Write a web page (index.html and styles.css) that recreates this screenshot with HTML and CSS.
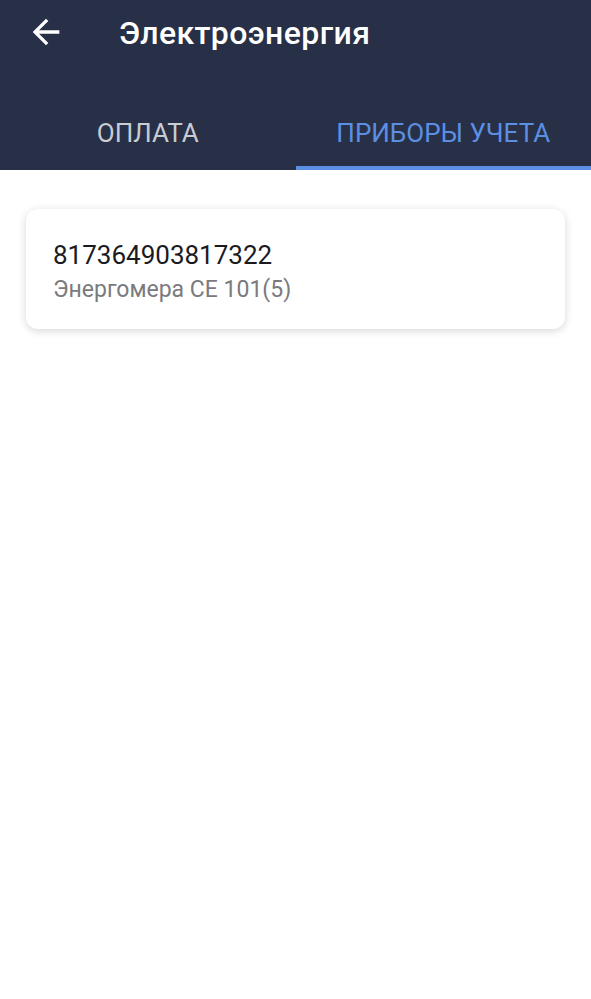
FILE: index.html
```html
<!DOCTYPE html>
<html lang="ru">
<head>
  <meta charset="UTF-8" />
  <meta name="viewport" content="width=device-width, initial-scale=1.0" />
  <title>Электроэнергия</title>
  <link rel="stylesheet" href="styles.css">
</head>
<body>
  <header class="appbar">
    <div class="toolbar">
      <button class="back-btn" aria-label="Назад">
        <svg viewBox="0 0 24 24" width="40" height="40">
          <path d="M20 11H7.83l5.59-5.59L12 4l-8 8 8 8 1.41-1.41L7.83 13H20v-2z" fill="#ffffff" />
        </svg>
      </button>
      <h1 class="title">Электроэнергия</h1>
    </div>
    <nav class="tabs">
      <div class="tab">ОПЛАТА</div>
      <div class="tab tab-active">ПРИБОРЫ УЧЕТА</div>
    </nav>
  </header>

  <main class="content">
    <div class="meter-card">
      <div class="meter-number">817364903817322</div>
      <div class="meter-model">Энергомера CE 101(5)</div>
    </div>
  </main>
</body>
</html>
```

FILE: styles.css
```css
:root {
  --navy: #283047;
  --accent: #5b8fe4;
  --tab-text: #c9ccd3;
  --text-dark: #1b1b1f;
  --text-gray: #7a7a7e;
}
* {
  box-sizing: border-box;
}
body {
  margin: 0;
  font-family: Roboto, 'Noto Sans', sans-serif;
  background: #ffffff;
}
.appbar {
  background: var(--navy);
  height: 170px;
  display: flex;
  flex-direction: column;
}
.toolbar {
  height: 66px;
  display: flex;
  align-items: center;
  padding-left: 26px;
}
.back-btn {
  background: none;
  border: none;
  padding: 0;
  width: 40px;
  height: 40px;
  margin-top: -2px;
  cursor: pointer;
}
.back-btn svg {
  display: block;
}
.title {
  margin: -1px 0 0 53px;
  color: #ffffff;
  font-size: 32px;
  font-weight: 500;
  letter-spacing: 0.4px;
}
.tabs {
  margin-top: auto;
  display: flex;
  height: 70px;
}
.tab {
  flex: 1;
  display: flex;
  align-items: center;
  justify-content: center;
  font-size: 26px;
  color: var(--tab-text);
  border-bottom: 4px solid transparent;
}
.tab-active {
  color: var(--accent);
  border-bottom-color: var(--accent);
}
.content {
  padding: 39px 26px;
}
.meter-card {
  background: #ffffff;
  border-radius: 12px;
  box-shadow: 0 2px 8px rgba(0, 0, 0, 0.16);
  padding: 30px 27px 24px;
}
.meter-number {
  font-size: 26px;
  color: var(--text-dark);
  line-height: 32px;
}
.meter-model {
  font-size: 23px;
  color: var(--text-gray);
  line-height: 30px;
  margin-top: 4px;
}
```
